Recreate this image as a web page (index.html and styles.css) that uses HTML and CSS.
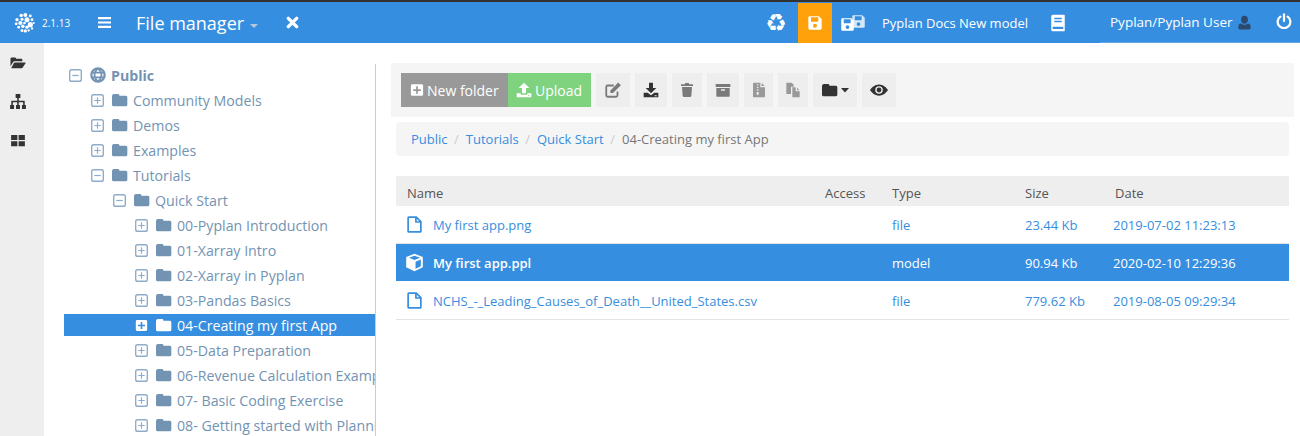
FILE: index.html
```html
<!DOCTYPE html>
<html lang="en">
<head>
	<meta charset="UTF-8">
	<title>File manager</title>
	<link rel="stylesheet" href="styles.css">
</head>
<body>
	<!-- icon sheet -->
	<svg class="sheet" xmlns="http://www.w3.org/2000/svg">
		<symbol id="i-save" viewBox="0 0 24 24"><path fill-rule="evenodd" d="M4 2h14l4 4v14a2 2 0 0 1-2 2H4a2 2 0 0 1-2-2V4a2 2 0 0 1 2-2zM6 3.500V10h11V3.500zM12 13a3 3 0 1 0 0 6 3 3 0 0 0 0-6z"/></symbol>
		<symbol id="i-book" viewBox="0 0 24 24"><path fill-rule="evenodd" d="M5 1h15a1 1 0 0 1 1 1v20a1 1 0 0 1-1 1H5a2 2 0 0 1-2-2V3a2 2 0 0 1 2-2zM7 5v2h10V5zM7 9v2h10V9zM5 17v3h14v-3z"/></symbol>
		<symbol id="i-user" viewBox="0 0 24 24"><path d="M12 1a5.500 6.500 0 0 1 5.500 6.500c0 3.500-2.500 6.500-5.500 6.500s-5.500-3-5.500-6.500A5.500 6.500 0 0 1 12 1zM5 23c-2 0-3-1-3-3 0-3 .8-6.500 4.500-6.500 1.500 1.300 3.500 2 5.500 2s4-.7 5.500-2c3.700 0 4.500 3.500 4.500 6.500 0 2-1 3-3 3z"/></symbol>
		<symbol id="i-power" viewBox="0 0 24 24"><path fill="none" stroke="currentColor" stroke-width="3.400" stroke-linecap="round" d="M6.500 5.500a9.500 9.500 0 1 0 11 0M12 2v10"/></symbol>
		<symbol id="i-bars" viewBox="0 0 14 14"><path d="M0 1h14v2.400H0zM0 5.800h14v2.400H0zM0 10.600h14V13H0z"/></symbol>
		<symbol id="i-times" viewBox="0 0 14 14"><path fill="none" stroke="currentColor" stroke-width="3.600" stroke-linecap="round" d="M2.500 2.500l9 9M11.500 2.500l-9 9"/></symbol>
		<symbol id="i-folder" viewBox="0 0 24 24"><path d="M3 3h6a2 2 0 0 1 2 2v.500h10a2.500 2.500 0 0 1 2 2.500v11a2.500 2.500 0 0 1-2.500 2.500h-18A2.500 2.500 0 0 1 0 19V6a3 3 0 0 1 3-3z"/></symbol>
		<symbol id="i-folder-open" viewBox="0 0 24 24"><path d="M0 18V6a2 2 0 0 1 2-2h5a2 2 0 0 1 2 2h8a2 2 0 0 1 2 2v2H7c-1.500 0-2.500.7-3.200 1.800z"/><path d="M1 21l4.300-8c.4-.7 1-1 1.700-1h16c1 0 1.300.7.800 1.500L19.500 20c-.5.700-1 1-1.800 1z"/></symbol>
		<symbol id="i-sitemap" viewBox="2 2 20 19"><path d="M9 2h6v5h-2v3.500h7.500V16H22v5h-5v-5h1.500v-3.500H13V16h1.500v5h-5v-5H11v-3.500H5.500V16H7v5H2v-5h1.500v-5.500H11V7H9z"/></symbol>
		<symbol id="i-grid" viewBox="0 0 24 24"><path d="M1 3h10v8H1zM13 3h10v8H13zM1 13h10v8H1zM13 13h10v8H13z"/></symbol>
		<symbol id="i-globe" viewBox="0 0 24 24"><circle cx="12" cy="12" r="10" fill="none" stroke="currentColor" stroke-width="3.400"/><path fill="none" stroke="currentColor" stroke-width="2.600" d="M12 2c-7 6-7 14 0 20M12 2c7 6 7 14 0 20M2 8.500h20M2 15.500h20"/></symbol>
		<symbol id="i-plus-box" viewBox="0 0 24 24"><path fill-rule="evenodd" d="M4 2h16a2.500 2.500 0 0 1 2.500 2.500v15A2.500 2.500 0 0 1 20 22H4a2.500 2.500 0 0 1-2.500-2.500v-15A2.500 2.500 0 0 1 4 2zM10.500 5.500V10.500H5.500v3h5v5h3v-5h5v-3h-5v-5z"/></symbol>
		<symbol id="i-upload" viewBox="0 0 24 24"><path fill-rule="evenodd" d="M12 1l8 8h-5v8H9V9H4zM1 17h6v2h10v-2h6v6H1zM18 20v1h2v-1z"/></symbol>
		<symbol id="i-edit" viewBox="0 0 24 24"><path fill="none" stroke="currentColor" stroke-width="2.400" d="M18 14v5a2 2 0 0 1-2 2H5a2 2 0 0 1-2-2V8a2 2 0 0 1 2-2h8"/><path d="M19 2l3.500 3.500L12 16H8.500v-3.500z"/></symbol>
		<symbol id="i-download" viewBox="0 0 24 24"><path fill-rule="evenodd" d="M9 1h6v8h5l-8 8-8-8h5zM1 16h6l5 4 5-4h6v7H1zM17.500 20v1.200h3V20z"/></symbol>
		<symbol id="i-trash" viewBox="0 0 24 24"><path d="M3 3.500h18v2.500H3zM9 1.500h6v2H9zM4.500 7.500h15L18.500 21a2 2 0 0 1-2 1.500h-9a2 2 0 0 1-2-1.500z"/></symbol>
		<symbol id="i-archive" viewBox="0 0 24 24"><path fill-rule="evenodd" d="M1 3h22v4.500H1zM2 9h20v12a1 1 0 0 1-1 1H3a1 1 0 0 1-1-1zM9 11v2h6v-2z"/></symbol>
		<symbol id="i-zip" viewBox="0 0 24 24"><path fill-rule="evenodd" d="M4 1h10v7h7v14a1 1 0 0 1-1 1H4a1 1 0 0 1-1-1V2a1 1 0 0 1 1-1zM16 1.500L20.500 6H16zM9 3v2h2V3zM9 7v2h2V7zM9 11v2h2v-2zM8.500 15v4h3v-4z"/></symbol>
		<symbol id="i-files" viewBox="0 0 24 24"><path d="M2 1h8l3 3v3H9v11H2zM11 8h5v6h6v9H11zM18 8.500l3.500 4H18z"/></symbol>
		<symbol id="i-caret" viewBox="0 0 10 6"><path d="M0 0h10L5 5.500z"/></symbol>
		<symbol id="i-eye" viewBox="0 0 24 24"><path fill-rule="evenodd" d="M12 4.500C6 4.500 2 9 0 12c2 3 6 7.500 12 7.500S22 15 24 12c-2-3-6-7.500-12-7.500zM12 7a5 5 0 1 1 0 10 5 5 0 0 1 0-10z"/><circle cx="12" cy="12" r="3.200"/></symbol>
		<symbol id="i-file" viewBox="0 0 24 24"><path fill="none" stroke="currentColor" stroke-width="2.400" stroke-linejoin="round" d="M4 1.500h10.500L21 8v13.500a1 1 0 0 1-1 1H4a1 1 0 0 1-1-1v-19a1 1 0 0 1 1-1zM14 2v6.500h6.500"/></symbol>
		<symbol id="i-cube" viewBox="0 0 24 24"><path fill-rule="evenodd" d="M12 1l10.500 4v13L12 23 1.500 18V5zM12 3.500L5 6l7 2.800L19 6zM13.300 11v9l6.700-3.200V8.300z"/></symbol>
		<symbol id="i-plus-line" viewBox="0 0 14 14"><rect x=".75" y=".75" width="12.500" height="12.500" rx="2" fill="none" stroke="currentColor" stroke-width="1.500"/><path fill="none" stroke="currentColor" stroke-width="1.300" d="M7 3.500v7M3.500 7h7"/></symbol>
		<symbol id="i-minus-line" viewBox="0 0 14 14"><rect x=".75" y=".75" width="12.500" height="12.500" rx="2" fill="none" stroke="currentColor" stroke-width="1.500"/><path fill="none" stroke="currentColor" stroke-width="1.300" d="M3.500 7h7"/></symbol>
	</svg>

	<header class="topbar">
		<div class="brand">
			<svg class="logo" viewBox="0 0 24 24" fill="#fff">
				<circle cx="8" cy="3" r="2"/><circle cx="13" cy="2.500" r="2.400"/><circle cx="19" cy="3.500" r="1.700"/>
				<circle cx="3" cy="8" r="2"/><circle cx="9" cy="7.500" r="1.800"/><circle cx="15" cy="8" r="3"/><circle cx="21" cy="8" r="1.700"/>
				<circle cx="2" cy="13" r="1.700"/><circle cx="7" cy="12" r="2.500"/><circle cx="12" cy="12" r="1.600"/><circle cx="19" cy="14" r="3.100"/><circle cx="23" cy="12" r="1.300"/>
				<circle cx="5" cy="17" r="1.700"/><circle cx="10" cy="16" r="2.100"/><circle cx="15" cy="17" r="2"/><circle cx="21" cy="18.500" r="1.400"/>
				<circle cx="9" cy="21" r="1.800"/><circle cx="13" cy="21.500" r="2"/><circle cx="17" cy="21" r="1.400"/>
			</svg>
			<span class="version">2.1.13</span>
		</div>
		<svg class="ico bars"><use href="#i-bars"/></svg>
		<div class="title">File manager <span class="title-caret"></span></div>
		<svg class="ico times"><use href="#i-times"/></svg>

		<div class="topbar-right">
			<span class="recycle">&#9851;</span>
			<button class="save-btn"><svg class="ico"><use href="#i-save"/></svg></button>
			<span class="save-all">
				<svg class="ico back"><use href="#i-save"/></svg>
				<svg class="ico front"><use href="#i-save"/></svg>
			</span>
			<span class="model-name">Pyplan Docs New model</span>
			<svg class="ico book"><use href="#i-book"/></svg>
			<div class="user-box">
				<span class="user-name">Pyplan/Pyplan User</span>
				<svg class="ico user"><use href="#i-user"/></svg>
				<svg class="ico power"><use href="#i-power"/></svg>
			</div>
		</div>
	</header>

	<div class="main">
		<nav class="rail">
			<svg class="ico"><use href="#i-folder-open"/></svg>
			<svg class="ico"><use href="#i-sitemap"/></svg>
			<svg class="ico"><use href="#i-grid"/></svg>
		</nav>

		<aside class="tree">
			<div class="node root"><svg class="tog"><use href="#i-minus-line"/></svg><svg class="fld"><use href="#i-globe"/></svg>Public</div>
			<div class="node lvl1"><svg class="tog"><use href="#i-plus-line"/></svg><svg class="fld"><use href="#i-folder"/></svg>Community Models</div>
			<div class="node lvl1"><svg class="tog"><use href="#i-plus-line"/></svg><svg class="fld"><use href="#i-folder"/></svg>Demos</div>
			<div class="node lvl1"><svg class="tog"><use href="#i-plus-line"/></svg><svg class="fld"><use href="#i-folder"/></svg>Examples</div>
			<div class="node lvl1"><svg class="tog"><use href="#i-minus-line"/></svg><svg class="fld"><use href="#i-folder"/></svg>Tutorials</div>
			<div class="node lvl2"><svg class="tog"><use href="#i-minus-line"/></svg><svg class="fld"><use href="#i-folder"/></svg>Quick Start</div>
			<div class="node lvl3"><svg class="tog"><use href="#i-plus-line"/></svg><svg class="fld"><use href="#i-folder"/></svg>00-Pyplan Introduction</div>
			<div class="node lvl3"><svg class="tog"><use href="#i-plus-line"/></svg><svg class="fld"><use href="#i-folder"/></svg>01-Xarray Intro</div>
			<div class="node lvl3"><svg class="tog"><use href="#i-plus-line"/></svg><svg class="fld"><use href="#i-folder"/></svg>02-Xarray in Pyplan</div>
			<div class="node lvl3"><svg class="tog"><use href="#i-plus-line"/></svg><svg class="fld"><use href="#i-folder"/></svg>03-Pandas Basics</div>
			<div class="node lvl3 active"><svg class="tog"><use href="#i-plus-box"/></svg><svg class="fld"><use href="#i-folder"/></svg>04-Creating my first App</div>
			<div class="node lvl3"><svg class="tog"><use href="#i-plus-line"/></svg><svg class="fld"><use href="#i-folder"/></svg>05-Data Preparation</div>
			<div class="node lvl3"><svg class="tog"><use href="#i-plus-line"/></svg><svg class="fld"><use href="#i-folder"/></svg>06-Revenue Calculation Example</div>
			<div class="node lvl3"><svg class="tog"><use href="#i-plus-line"/></svg><svg class="fld"><use href="#i-folder"/></svg>07- Basic Coding Exercise</div>
			<div class="node lvl3"><svg class="tog"><use href="#i-plus-line"/></svg><svg class="fld"><use href="#i-folder"/></svg>08- Getting started with Planning</div>
		</aside>

		<section class="content">
			<div class="toolbar">
				<button class="btn btn-grey"><svg class="ico"><use href="#i-plus-box"/></svg>New folder</button>
				<button class="btn btn-green"><svg class="ico"><use href="#i-upload"/></svg>Upload</button>
				<button class="tool w34 muted big"><svg class="ico"><use href="#i-edit"/></svg></button>
				<button class="tool w32"><svg class="ico"><use href="#i-download"/></svg></button>
				<button class="tool w30 muted"><svg class="ico"><use href="#i-trash"/></svg></button>
				<button class="tool w32 muted"><svg class="ico"><use href="#i-archive"/></svg></button>
				<button class="tool w29 faint"><svg class="ico"><use href="#i-zip"/></svg></button>
				<button class="tool w30 faint"><svg class="ico"><use href="#i-files"/></svg></button>
				<button class="tool w44"><svg class="ico"><use href="#i-folder"/></svg><svg class="caret"><use href="#i-caret"/></svg></button>
				<button class="tool w34 big"><svg class="ico"><use href="#i-eye"/></svg></button>
			</div>

			<ol class="crumbs">
				<li><a href="#">Public</a></li>
				<li><a href="#">Tutorials</a></li>
				<li><a href="#">Quick Start</a></li>
				<li class="current">04-Creating my first App</li>
			</ol>

			<table class="files">
				<thead>
					<tr><th class="c-name">Name</th><th class="c-access">Access</th><th class="c-type">Type</th><th class="c-size">Size</th><th class="c-date">Date</th></tr>
				</thead>
				<tbody>
					<tr>
						<td><span class="fname"><svg class="ico"><use href="#i-file"/></svg>My first app.png</span></td>
						<td></td><td>file</td><td>23.44 Kb</td><td>2019-07-02 11:23:13</td>
					</tr>
					<tr class="selected">
						<td><span class="fname"><svg class="ico cube"><use href="#i-cube"/></svg>My first app.ppl</span></td>
						<td></td><td>model</td><td>90.94 Kb</td><td>2020-02-10 12:29:36</td>
					</tr>
					<tr>
						<td><span class="fname"><svg class="ico"><use href="#i-file"/></svg>NCHS_-_Leading_Causes_of_Death__United_States.csv</span></td>
						<td></td><td>file</td><td>779.62 Kb</td><td>2019-08-05 09:29:34</td>
					</tr>
				</tbody>
			</table>
		</section>
	</div>
</body>
</html>
```

FILE: styles.css
```css
html, body {
	height: 100%;
}
body {
	margin: 0;
	overflow: hidden;
	background: #fff;
	font-family: "Open Sans", sans-serif;
	font-size: 13px;
	color: #555;
}
button {
	font-family: inherit;
	border: 0;
	padding: 0;
}
a {
	text-decoration: none;
	color: inherit;
}
.sheet {
	display: none;
}
.ico {
	display: block;
	fill: currentColor;
	flex: none;
}

/* top bar */
.topbar {
	display: flex;
	align-items: center;
	height: 41px;
	background: #368ee0;
	border-top: 2px solid #333;
	color: #fff;
}
.brand {
	display: flex;
	align-items: center;
	width: 98px;
	flex: none;
}
.logo {
	width: 21px;
	height: 20px;
	margin-left: 14px;
}
.version {
	margin-left: 7px;
	font-size: 10px;
}
.bars {
	width: 13px;
	height: 13px;
}
.title {
	margin-left: 25px;
	font-size: 18px;
	display: flex;
	align-items: center;
}
.title-caret {
	width: 0;
	height: 0;
	margin: 6px 0 0 6px;
	border-top: 4px solid #b9c7d6;
	border-left: 4px solid transparent;
	border-right: 4px solid transparent;
}
.times {
	width: 13px;
	height: 13px;
	margin-left: 28px;
}
.topbar-right {
	display: flex;
	align-items: center;
	margin-left: auto;
	height: 100%;
}
.recycle {
	font-family: "DejaVu Sans", sans-serif;
	font-size: 24px;
	line-height: 1;
	margin-right: 11px;
}
.save-btn {
	display: flex;
	align-items: center;
	justify-content: center;
	width: 34px;
	height: 40px;
	background: #ffa10a;
	color: #fff;
}
.save-btn .ico {
	width: 16px;
	height: 16px;
}
.save-all {
	position: relative;
	width: 26px;
	height: 18px;
	margin-left: 8px;
}
.save-all .ico {
	position: absolute;
	width: 15px;
	height: 15px;
}
.save-all .back {
	right: 0;
	top: 0;
	opacity: .8;
}
.save-all .front {
	left: 0;
	bottom: 0;
}
.model-name {
	margin-left: 16px;
}
.book {
	width: 18px;
	height: 18px;
	margin-left: 21px;
}
.user-box {
	display: flex;
	align-items: center;
	width: 200px;
	height: 100%;
	margin-left: 33px;
	box-sizing: border-box;
	padding-left: 10px;
	border-bottom: 1px solid #62a6e8;
}
.user-name {
	font-size: 13.5px;
}
.user {
	width: 15px;
	height: 15px;
	margin-left: 4px;
	color: #2c4a6e;
}
.power {
	width: 16px;
	height: 16px;
	margin: 0 8px 3px auto;
}

/* body */
.main {
	display: flex;
	height: 393px;
}
.rail {
	display: flex;
	flex-direction: column;
	align-items: center;
	gap: 24px;
	width: 44px;
	box-sizing: border-box;
	padding: 12px 9px 0 0;
	background: #eee;
	color: #333;
	flex: none;
}
.rail .ico {
	width: 16px;
	height: 15px;
}

/* tree */
.tree {
	width: 311px;
	margin: 21px 0 0 20px;
	border-right: 1px solid #ccc;
	overflow: hidden;
	flex: none;
	font-size: 14.2px;
	color: #7393b3;
}
.node {
	display: flex;
	align-items: center;
	height: 22px;
	margin-bottom: 3px;
	white-space: nowrap;
}
.lvl1 { padding-left: 27px; }
.lvl2 { padding-left: 49px; }
.lvl3 { padding-left: 71px; }
.root {
	padding-left: 5px;
	font-weight: 700;
}
.tog {
	width: 13px;
	height: 13px;
	margin-right: 8px;
	color: #8fadc9;
	flex: none;
}
.fld {
	width: 16px;
	height: 16px;
	margin-right: 5px;
	fill: #7393b3;
	color: #7393b3;
	flex: none;
}
.active {
	background: #368ee0;
	color: #fff;
}
.active .tog {
	fill: #fff;
}
.active .fld {
	fill: #fff;
}

/* right pane */
.content {
	flex: 1;
	margin: 20px 6px 0 15px;
	min-width: 0;
}
.toolbar {
	display: flex;
	align-items: center;
	height: 54px;
	padding-left: 10px;
	background: #f5f5f5;
}
.btn {
	display: flex;
	align-items: center;
	height: 34px;
	font-size: 14px;
	color: #fff;
}
.btn .ico {
	width: 14px;
	height: 14px;
	margin-right: 3px;
}
.btn-grey {
	width: 107px;
	padding-left: 9px;
	background: #999;
}
.btn-green {
	width: 83px;
	padding-left: 8px;
	background: #7fd37f;
}
.btn-green .ico {
	width: 16px;
	height: 16px;
	margin-right: 3px;
}
.tool {
	display: flex;
	align-items: center;
	justify-content: center;
	gap: 3px;
	height: 34px;
	margin-left: 5px;
	background: #eee;
	color: #333;
}
.tool .ico {
	width: 16px;
	height: 16px;
}
.tool.big .ico {
	width: 18px;
	height: 18px;
}
.tool .caret {
	width: 8px;
	height: 5px;
	fill: currentColor;
}
.muted { color: #7a7a7a; }
.faint { color: #999; }
.w29 { width: 29px; }
.w30 { width: 30px; }
.w32 { width: 32px; }
.w34 { width: 34px; }
.w44 { width: 44px; }

.crumbs {
	display: flex;
	align-items: center;
	width: 893px;
	height: 34px;
	margin: 5px 0 0 5px;
	padding: 0 0 0 15px;
	box-sizing: border-box;
	list-style: none;
	background: #f5f5f5;
	border-radius: 4px;
	color: #777;
}
.crumbs a {
	color: #368ee0;
}
.crumbs li + li::before {
	content: "/";
	padding: 0 7px 0 6.5px;
	color: #ccc;
}

.files {
	width: 893px;
	margin: 20px 0 0 5px;
	border-collapse: collapse;
	table-layout: fixed;
}
.files th {
	height: 27px;
	padding: 3px 0 0 10px;
	background: #eee;
	font-weight: 400;
	text-align: left;
	color: #555;
}
.files th.c-name {
	padding-left: 11px;
}
.files th.c-date {
	padding-left: 12px;
}
.c-name { width: 408px; }
.c-access { width: 57px; }
.c-type { width: 123px; }
.c-size { width: 78px; }
.files td {
	height: 37px;
	padding: 0 0 0 10px;
	border-bottom: 1px solid #e3e3e3;
	color: #368ee0;
}
.fname {
	display: flex;
	align-items: center;
}
.fname .ico {
	width: 17px;
	height: 17px;
	margin-right: 10px;
}
.fname .cube {
	width: 19px;
	height: 19px;
	margin: 0 9px 0 -1px;
}
.selected td {
	background: #368ee0;
	color: #fff;
	font-weight: 500;
	border-bottom-color: #fff;
}
.selected .fname {
	font-weight: 600;
}
```
